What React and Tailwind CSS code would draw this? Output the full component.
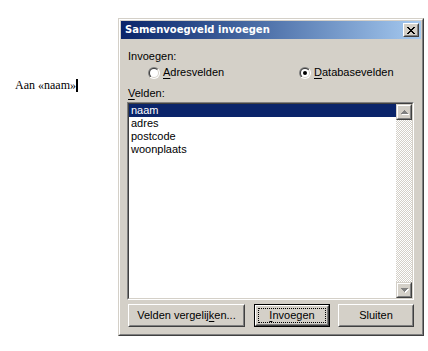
import React from "react";

function Radio({ checked, id }) {
  return (
    <svg width="12" height="12" viewBox="0 0 12 12" className="shrink-0">
      <defs>
        <linearGradient id={id + "o"} x1="0" y1="0" x2="1" y2="1">
          <stop offset="0.5" stopColor="#808080" />
          <stop offset="0.5" stopColor="#ffffff" />
        </linearGradient>
        <linearGradient id={id + "i"} x1="0" y1="0" x2="1" y2="1">
          <stop offset="0.5" stopColor="#404040" />
          <stop offset="0.5" stopColor="#d4d0c8" />
        </linearGradient>
      </defs>
      <circle cx="6" cy="6" r="6" fill={`url(#${id}o)`} />
      <circle cx="6" cy="6" r="5" fill={`url(#${id}i)`} />
      <circle cx="6" cy="6" r="4" fill="#ffffff" />
      {checked && <circle cx="6" cy="6" r="2" fill="#000000" />}
    </svg>
  );
}

function CloseGlyph() {
  const rows = [
    [0, 1, 6, 7],
    [1, 2, 5, 6],
    [2, 3, 4, 5],
    [3, 4],
    [2, 3, 4, 5],
    [1, 2, 5, 6],
    [0, 1, 6, 7],
  ];
  return (
    <svg width="8" height="7" viewBox="0 0 8 7" shapeRendering="crispEdges">
      {rows.map((cols, y) =>
        cols.map((x) => <rect key={y + "-" + x} x={x} y={y} width="1" height="1" fill="#000" />)
      )}
    </svg>
  );
}

function Arrow({ down }) {
  const rows = [[3, 1], [2, 3], [1, 5], [0, 7]];
  const r = down ? [...rows].reverse() : rows;
  return (
    <svg width="8" height="5" viewBox="0 0 8 5" shapeRendering="crispEdges">
      {r.map(([x, w], y) => (
        <rect key={"s" + y} x={x + 1} y={y + 1} width={w} height="1" fill="#ffffff" />
      ))}
      {r.map(([x, w], y) => (
        <rect key={"a" + y} x={x} y={y} width={w} height="1" fill="#808080" />
      ))}
    </svg>
  );
}

function ScrollBtn({ down }) {
  return (
    <div className="w-[16px] h-[16px] border border-t-[#d4d0c8] border-l-[#d4d0c8] border-r-[#404040] border-b-[#404040] bg-[#d4d0c8]">
      <div className="w-full h-full border border-t-white border-l-white border-r-[#808080] border-b-[#808080] flex items-center justify-center pl-px">
        <Arrow down={down} />
      </div>
    </div>
  );
}

function Button({ children, width, isDefault }) {
  if (isDefault) {
    return (
      <div className={`${width} h-[23px] border border-black bg-[#d4d0c8]`}>
        <div className="w-full h-full border border-t-white border-l-white border-r-[#404040] border-b-[#404040]">
          <div className="w-full h-full border border-t-[#d4d0c8] border-l-[#d4d0c8] border-r-[#808080] border-b-[#808080] p-px">
            <div className="w-full h-full border border-dotted border-black flex items-center justify-center">
              {children}
            </div>
          </div>
        </div>
      </div>
    );
  }
  return (
    <div className={`${width} h-[23px] border border-t-white border-l-white border-r-[#404040] border-b-[#404040] bg-[#d4d0c8]`}>
      <div className="w-full h-full border border-t-[#d4d0c8] border-l-[#d4d0c8] border-r-[#808080] border-b-[#808080] flex items-center justify-center">
        {children}
      </div>
    </div>
  );
}

function Dialog() {
  const items = ["naam", "adres", "postcode", "woonplaats"];
  return (
    <div className="mt-[18px] w-[306px] h-[318px] border border-t-[#d4d0c8] border-l-[#d4d0c8] border-r-[#404040] border-b-[#404040] font-['Liberation_Sans',sans-serif] text-[11px] leading-[13px] text-black">
      <div className="w-full h-full border border-t-white border-l-white border-r-[#808080] border-b-[#808080] bg-[#d4d0c8] p-px flex flex-col">
        <div className="h-[18px] bg-gradient-to-r from-[#0a246a] to-[#a6caf0] flex items-center justify-between pl-[4px] pr-[2px]">
          <span className="font-['DejaVu_Sans',sans-serif] font-bold text-[10px] text-white leading-[18px] tracking-[0px]">
            Samenvoegveld invoegen
          </span>
          <div className="w-[16px] h-[14px] border border-t-white border-l-white border-r-[#404040] border-b-[#404040] bg-[#d4d0c8]">
            <div className="w-full h-full border border-t-[#d4d0c8] border-l-[#d4d0c8] border-r-[#808080] border-b-[#808080] flex items-center justify-center">
              <CloseGlyph />
            </div>
          </div>
        </div>

        <div className="flex flex-col pl-[6px] pr-[7px]">
          <div className="mt-[11px] pl-px">Invoegen:</div>
          <div className="mt-[3px] flex items-center h-[13px]">
            <div className="ml-[21px] flex items-center gap-[3px] w-[151px]">
              <Radio id="r1" />
              <span>
                <span className="underline underline-offset-[2px]">A</span>dresvelden
              </span>
            </div>
            <div className="flex items-center gap-[3px]">
              <Radio id="r2" checked />
              <span>
                <span className="underline underline-offset-[2px]">D</span>atabasevelden
              </span>
            </div>
          </div>
          <div className="mt-[8px] pl-px">
            <span className="underline underline-offset-[2px]">V</span>elden:
          </div>
          <div className="mt-[2px] w-[287px] h-[198px] border border-t-[#808080] border-l-[#808080] border-r-white border-b-white">
            <div className="w-full h-full border border-t-[#404040] border-l-[#404040] border-r-[#d4d0c8] border-b-[#d4d0c8] bg-white flex">
              <div className="flex-1 flex flex-col">
                {items.map((it, i) => (
                  <div
                    key={it}
                    className={`h-[13px] leading-[13px] pl-[2px] ${i === 0 ? "bg-[#0a246a] text-white" : ""}`}
                  >
                    {it}
                  </div>
                ))}
              </div>
              <div className="w-[16px] flex flex-col">
                <ScrollBtn />
                <div className="flex-1 bg-[image:repeating-conic-gradient(#d4d0c8_0%_25%,#ffffff_0%_50%)] bg-[length:2px_2px]" />
                <ScrollBtn down />
              </div>
            </div>
          </div>
          <div className="mt-[4px] flex items-center pl-[1px]">
            <Button width="w-[117px]">
              Velden vergelij<span className="underline underline-offset-[2px]">k</span>en...
            </Button>
            <div className="ml-[9px]">
              <Button width="w-[76px]" isDefault>
                <span>
                  <span className="underline underline-offset-[2px]">I</span>nvoegen
                </span>
              </Button>
            </div>
            <div className="ml-[8px]">
              <Button width="w-[76px]">Sluiten</Button>
            </div>
          </div>
        </div>
      </div>
    </div>
  );
}

export default function App() {
  return (
    <div className="w-[428px] h-[351px] bg-white flex items-start overflow-hidden">
      <div className="w-[118px] shrink-0 pt-[78px] pl-[15px] font-['Liberation_Serif',serif] text-[12px] leading-[14px] text-black flex items-center">
        <span>Aan «naam»</span>
        <span className="inline-block w-[2px] h-[13px] bg-black" />
      </div>
      <Dialog />
    </div>
  );
}
